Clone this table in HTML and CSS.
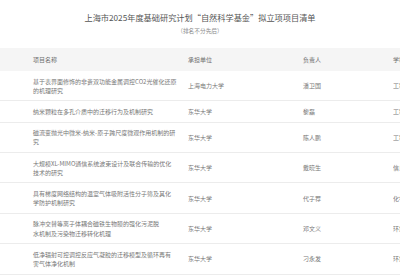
FILE: index.html
```html
<!DOCTYPE html>
<html lang="zh-CN">
<head>
<meta charset="utf-8">
<link rel="stylesheet" href="styles.css">
</head>
<body>
<div class="page">
  <h1 class="title">上海市2025年度基础研究计划“自然科学基金”拟立项项目清单</h1>
  <p class="subtitle">（排名不分先后）</p>
  <div class="table">
    <div class="row head">
      <div class="c1">项目名称</div>
      <div class="c2">承担单位</div>
      <div class="c3">负责人</div>
      <div class="c4">学科</div>
    </div>
    <div class="row">
      <div class="c1">基于表界面修饰的非贵双功能金属调控CO2光催化还原<br>的机理研究</div>
      <div class="c2">上海电力大学</div>
      <div class="c3">潘卫国</div>
      <div class="c4">工程</div>
    </div>
    <div class="row">
      <div class="c1">纳米颗粒在多孔介质中的迁移行为及机制研究</div>
      <div class="c2">东华大学</div>
      <div class="c3">黎磊</div>
      <div class="c4">工程</div>
    </div>
    <div class="row">
      <div class="c1">磁流变抛光中微米-纳米-原子跨尺度微观作用机制的研<br>究</div>
      <div class="c2">东华大学</div>
      <div class="c3">陈人鹏</div>
      <div class="c4">工程</div>
    </div>
    <div class="row">
      <div class="c1">大规模XL-MIMO通信系统波束设计及联合传输的优化<br>技术的研究</div>
      <div class="c2">东华大学</div>
      <div class="c3">戴晓生</div>
      <div class="c4">信息</div>
    </div>
    <div class="row">
      <div class="c1">具有梯度网络结构的温室气体吸附活性分子筛及其化<br>学防护机制研究</div>
      <div class="c2">东华大学</div>
      <div class="c3">代子荐</div>
      <div class="c4">化学</div>
    </div>
    <div class="row">
      <div class="c1">脉冲交替等离子体耦合磁铁生物膜的强化污泥脱<br>水机制及污染物迁移转化机理</div>
      <div class="c2">东华大学</div>
      <div class="c3">邓文义</div>
      <div class="c4">环境</div>
    </div>
    <div class="row">
      <div class="c1">低净辐射可控调控反应气凝胶的迁移模型及循环再有<br>害气体净化机制</div>
      <div class="c2">东华大学</div>
      <div class="c3">刁永发</div>
      <div class="c4">环境</div>
    </div>
  </div>
</div>
</body>
</html>
```

FILE: styles.css
```css
html, body {
  margin: 0;
  padding: 0;
  background: #ffffff;
}
body {
  font-family: "Noto Sans CJK SC", "Noto Sans", sans-serif;
  color: #6b6b6b;
  overflow: hidden;
  width: 400px;
  height: 280px;
}
.page {
  width: 400px;
}
.title {
  margin: 11px 0 0;
  font-size: 8.2px;
  line-height: 12px;
  font-weight: 400;
  text-align: center;
  color: #555555;
}
.subtitle {
  margin: 4px 0 0;
  font-size: 5.7px;
  line-height: 8px;
  text-align: center;
  color: #8a8a8a;
}
.table {
  margin-top: 13px;
  width: 400px;
}
.row {
  display: grid;
  grid-template-columns: 155px 115px 90px 1fr;
  align-items: center;
  padding: 5.5px 0 5.5px 33px;
  border-bottom: 1px solid #ececec;
  font-size: 6px;
  line-height: 9.2px;
  color: #787878;
}
.row.head {
  background: #f5f5f5;
  padding-top: 7px;
  padding-bottom: 7px;
  line-height: 9px;
  border-bottom: none;
  color: #6e6e6e;
}
.c1 {
  white-space: nowrap;
}
.c4 {
  white-space: nowrap;
  overflow: hidden;
}
```
